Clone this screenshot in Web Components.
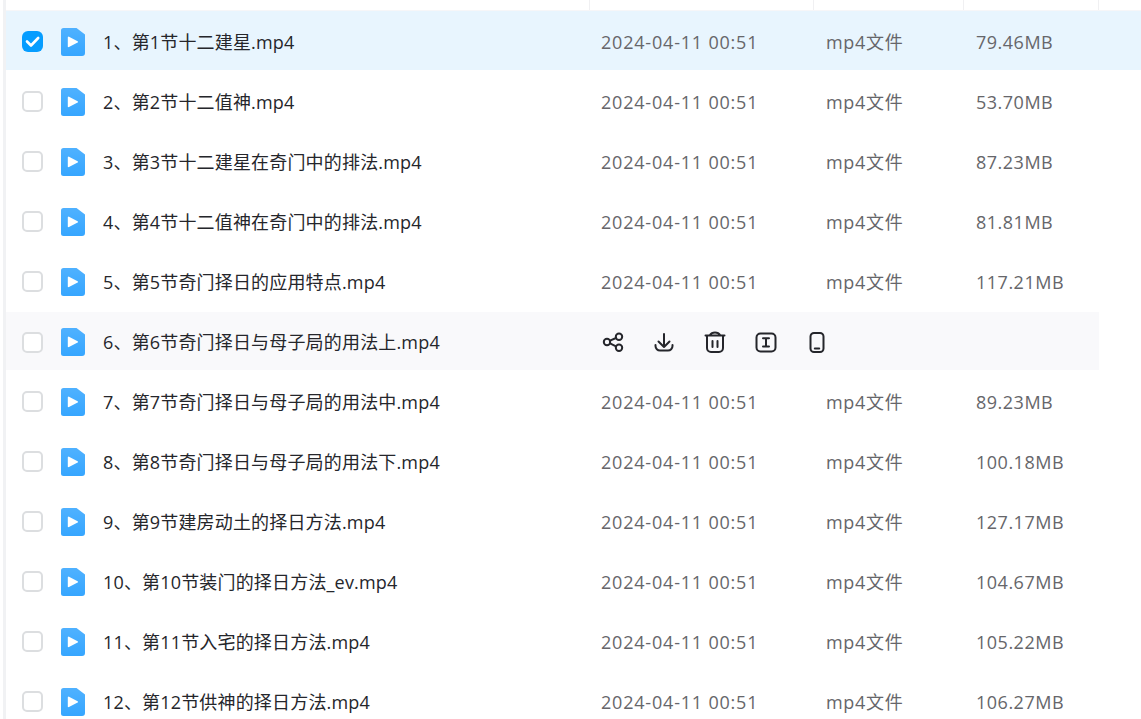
<!DOCTYPE html>
<html><head><meta charset="utf-8">
<style>html,body{margin:0;padding:0;background:#fff;overflow:hidden;height:719px}</style>
</head><body>
<file-list></file-list>
<template id="row-t">
<style>
:host{display:grid;grid-template-columns:27px 54px 485px 224px 150px 135px 43px;height:59px;margin-bottom:1px;align-items:center;padding:2px 0 0 16px;font:18px/24px "Open Sans","Noto Sans CJK SC",sans-serif;color:#25262b;box-sizing:border-box}
:host([selected]){background:#e8f5fe}
:host([hover]){background:#f9f9fb;width:1093px;height:58px;margin-top:2px;padding-top:2px}
.cb{width:21px;height:21px;box-sizing:border-box;border:2px solid #dcdee0;border-radius:5px;display:block;background:#fff}
:host([selected]) .cb{background:#069dff;border:none;border-radius:6px}
.cb svg{display:block}
.ic{display:block;margin-left:12px}
.n{white-space:nowrap;grid-column:3;letter-spacing:.17px}
.c{color:#66666a;white-space:nowrap;padding-left:13px;letter-spacing:.8px}
.c+.c{padding-left:14px;letter-spacing:.7px}
.c+.c+.c{letter-spacing:.5px}
.acts{grid-column:4/8;display:flex;gap:27px;padding-left:13px;align-items:center}
.acts svg{width:24px;height:24px;display:block;fill:none;stroke:#25262b;stroke-width:2;stroke-linecap:round;stroke-linejoin:round}
</style>
<span class="cb" id="cb"></span>
<svg class="ic" width="24" height="28" viewBox="0 0 24 28"><defs><linearGradient id="g" x1="0" y1="0" x2="0" y2="1"><stop offset="0" stop-color="#4fb1ff"/><stop offset="1" stop-color="#36a6ff"/></linearGradient></defs><path d="M2.500 0H15.500L24 6.500V25a3 3 0 0 1-3 3H2.500a2.500 2.500 0 0 1-2.500-2.500V2.500a2.500 2.500 0 0 1 2.500-2.500Z" fill="url(#g)"/><path d="M6.800 9.400v9a.8.8 0 0 0 1.200.7l8.600-4.500a.8.8 0 0 0 0-1.400L8 8.700a.8.8 0 0 0-1.200.7Z" fill="#fff"/></svg>
<span class="n" id="n"></span>
<span class="c" id="d"></span><span class="c" id="t"></span><span class="c" id="s"></span>
</template>
<script>
const CHECK='<svg width="21" height="21" viewBox="0 0 21 21"><path d="M5 10.500l4 4 7.200-7.500" fill="none" stroke="#fff" stroke-width="2.600" stroke-linecap="round" stroke-linejoin="round"/></svg>';
const ACTS=`<div class="acts">
<svg viewBox="0 0 24 24"><circle cx="6" cy="12" r="3.200"/><circle cx="18" cy="6.700" r="3.200"/><circle cx="18" cy="17.800" r="3.200"/><path d="M9 10.700l6-2.700M9 13.300l6 3"/></svg>
<svg viewBox="0 0 24 24"><path d="M12 4v13M6.500 11.500L12 17l5.500-5.500M3.500 15v1a4.500 4.500 0 0 0 4.500 4.500h8a4.500 4.500 0 0 0 4.500-4.500v-1"/></svg>
<svg viewBox="0 0 24 24"><path d="M2.500 5.500h19M7 5C8 3.200 10 2.500 12 2.500s4 .7 5 2.500M4 6v12a4 4 0 0 0 4 4h8a4 4 0 0 0 4-4V6M9.500 11v6M14.500 11v6"/></svg>
<svg viewBox="0 0 24 24"><rect x="2.500" y="3.500" width="19" height="18" rx="4"/><path d="M9 8.300h6M9 16.500h6M12 8.300v8.200"/></svg>
<svg viewBox="0 0 24 24"><rect x="5.500" y="3" width="13" height="19" rx="3.500"/><path d="M9.800 18.500h4.400"/></svg>
</div>`;
class FileRow extends HTMLElement{
  constructor(){super();const r=this.attachShadow({mode:"open"});r.appendChild(document.getElementById("row-t").content.cloneNode(true));}
  connectedCallback(){
    const r=this.shadowRoot;
    r.getElementById("n").textContent=this.getAttribute("name");
    if(this.hasAttribute("selected"))r.getElementById("cb").innerHTML=CHECK;
    if(this.hasAttribute("hover")){
      ["d","t","s"].forEach(i=>r.getElementById(i).remove());
      r.getElementById("n").insertAdjacentHTML("afterend",ACTS);
    }else{
      r.getElementById("d").textContent="2024-04-11 00:51";
      r.getElementById("t").textContent="mp4文件";
      r.getElementById("s").textContent=this.getAttribute("size");
    }
  }
}
customElements.define("file-row",FileRow);
class HeadStub extends HTMLElement{
  constructor(){super();this.attachShadow({mode:"open"}).innerHTML=`<style>
  :host{display:grid;grid-template-columns:584px 224px 150px 135px 1fr;height:11px;border-bottom:1px solid #f6f6f8;box-sizing:border-box}
  i{display:block;border-right:1px solid #f0f0f2}
  i:last-child{border:none}
  </style><i></i><i></i><i></i><i></i><i></i>`;}
}
customElements.define("head-stub",HeadStub);
class FileList extends HTMLElement{
  constructor(){super();this.attachShadow({mode:"open"}).innerHTML=`<style>
  :host{display:block;height:719px;overflow:hidden;box-sizing:border-box}
  .wrap{margin-left:3px;border-left:3px solid #f1f2f4;height:719px}
  </style><div class="wrap" id="w"><head-stub></head-stub></div>`;
    const w=this.shadowRoot.getElementById("w");
    const rows=[["1、第1节十二建星.mp4","79.46MB"],["2、第2节十二值神.mp4","53.70MB"],["3、第3节十二建星在奇门中的排法.mp4","87.23MB"],["4、第4节十二值神在奇门中的排法.mp4","81.81MB"],["5、第5节奇门择日的应用特点.mp4","117.21MB"],["6、第6节奇门择日与母子局的用法上.mp4",""],["7、第7节奇门择日与母子局的用法中.mp4","89.23MB"],["8、第8节奇门择日与母子局的用法下.mp4","100.18MB"],["9、第9节建房动土的择日方法.mp4","127.17MB"],["10、第10节装门的择日方法_ev.mp4","104.67MB"],["11、第11节入宅的择日方法.mp4","105.22MB"],["12、第12节供神的择日方法.mp4","106.27MB"]];
    rows.forEach((x,i)=>{const e=document.createElement("file-row");e.setAttribute("name",x[0]);e.setAttribute("size",x[1]);if(i==0)e.setAttribute("selected","");if(i==5)e.setAttribute("hover","");w.appendChild(e);});
  }
}
customElements.define("file-list",FileList);
</script>
</body></html>
